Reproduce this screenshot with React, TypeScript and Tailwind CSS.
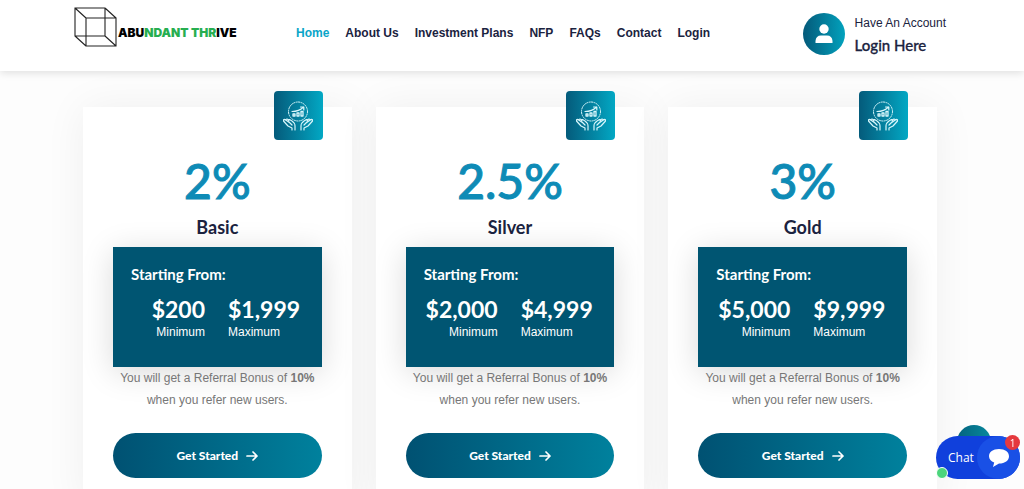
const navLinks = ['Home', 'About Us', 'Investment Plans', 'NFP', 'FAQs', 'Contact', 'Login']

const plans = [
	{ name: 'Basic', rate: '2%', min: '$200', max: '$1,999' },
	{ name: 'Silver', rate: '2.5%', min: '$2,000', max: '$4,999' },
	{ name: 'Gold', rate: '3%', min: '$5,000', max: '$9,999' },
]

type Plan = (typeof plans)[number]

function Logo()
{
	return (
		<a href="#home" className="flex items-center shrink-0" aria-label="Abundant Thrive">
			<svg className="w-[43px] h-10" viewBox="0 0 43 40" fill="none" stroke="#222" strokeWidth="1.1">
				<path d="M1 1H31V29H1ZM12 11H42V39H12ZM1 1L12 11M31 1L42 11M31 29L42 39M1 29L12 39" />
			</svg>
			<span className="mt-3 ml-px font-[Inter,sans-serif] font-black text-[12px] leading-4 whitespace-nowrap text-black">
				ABU<span className="text-[#27ae50]">NDANT THR</span>IVE
			</span>
		</a>
	)
}

function Header()
{
	return (
		<header className="relative z-10 flex h-[71px] items-start bg-white pt-[7px] pl-[74px] pr-[78px] shadow-[0_2px_8px_rgba(0,0,0,0.12)]">
			<div className="w-[222px] shrink-0">
				<Logo />
			</div>
			<nav className="mt-4 flex gap-4 text-xs leading-5 font-bold whitespace-nowrap text-[#1b2340]">
				{navLinks.map((link) => (
					<a key={link} href="#" className={link === 'Home' ? 'text-[#0aa5c8]' : ''}>{link}</a>
				))}
			</nav>
			<a href="#login" className="ml-auto mt-[5px] flex items-center gap-[10px] whitespace-nowrap text-[#1b2340]">
				<span className="flex size-[42px] items-center justify-center rounded-full bg-linear-to-r from-[#045a7a] to-[#02a2bd]">
					<svg className="w-[18px] h-5" viewBox="0 0 18 20" fill="white">
						<circle cx="9" cy="5" r="4.7" />
						<path d="M0.5 19V17Q1 11.5 6 11.5H12Q17 11.5 17.5 17V19Z" />
					</svg>
				</span>
				<span className="flex flex-col">
					<span className="text-xs leading-[22px]">Have An Account</span>
					<span className="font-[Lato,sans-serif] text-[15px] leading-[22px] font-medium [-webkit-text-stroke:0.3px]">Login Here</span>
				</span>
			</a>
		</header>
	)
}

function GrowthIcon()
{
	return (
		<svg className="size-[30px]" viewBox="0 0 30 30" fill="none" stroke="#d8f6fb" strokeWidth="1" strokeLinecap="round" strokeLinejoin="round">
			<circle cx="15" cy="10.5" r="9.5" strokeDasharray="1.2 1.3" />
			<path d="M9 10.5Q16 10.5 20.5 6M17.5 6H20.8V9" strokeWidth="1.2" />
			<path d="M10 15V13H12V15ZM14 15V12H16V15ZM18 15V10.5H20V15Z" strokeWidth="1.3" />
			<path d="M12 29V25Q12 22 9 20L6.5 18.5L5 20L9 24M7 22L2 18.5Q0 18 .5 20L5 25L9 27V29M2 19L4 18L6 19" strokeWidth="1.2" />
			<path d="M18 29V25Q18 22 21 20L23.5 18.5L25 20L21 24M23 22L28 18.5Q30 18 29.5 20L25 25L21 27V29M28 19L26 18L24 19" strokeWidth="1.2" />
		</svg>
	)
}

function PlanCard({ plan }: { plan: Plan })
{
	return (
		<article className="relative flex flex-col items-center bg-white px-[30px] pt-12 pb-[30px] text-center shadow-[0_0_40px_rgba(0,0,0,0.06)]">
			<div className="absolute -top-4 right-[29px] flex size-[49px] items-center justify-center rounded bg-linear-to-r from-[#045b7b] to-[#02a8c4]">
				<GrowthIcon />
			</div>
			<p className="font-[Lato,sans-serif] text-[48px] leading-[52px] font-medium text-[#0e8bb6] [-webkit-text-stroke:1px]">{plan.rate}</p>
			<h3 className="mt-2 font-[Lato,sans-serif] text-lg leading-6 font-bold text-[#1b2340]">{plan.name}</h3>
			<div className="mt-2 h-[120px] w-full bg-[#005572] pt-4 text-white shadow-[0_5px_30px_rgba(0,0,0,0.15)]">
				<h4 className="pl-[18px] text-left font-[Lato,sans-serif] text-[15px] leading-[22px] font-bold">Starting From:</h4>
				<dl className="mt-[10px] grid grid-cols-[92px_1fr] gap-x-[23px]">
					<div className="flex flex-col-reverse text-right">
						<dt className="text-xs leading-[18px]">Minimum</dt>
						<dd className="font-[Lato,sans-serif] text-[23px] leading-7 font-bold">{plan.min}</dd>
					</div>
					<div className="flex flex-col-reverse text-left">
						<dt className="text-xs leading-[18px]">Maximum</dt>
						<dd className="font-[Lato,sans-serif] text-[23px] leading-7 font-bold">{plan.max}</dd>
					</div>
				</dl>
			</div>
			<p className="text-xs leading-[22px] text-[#777]">
				You will get a Referral Bonus of <strong>10%</strong><br />when you refer new users.
			</p>
			<button type="button" className="mt-[22px] flex h-[45px] w-full items-center justify-center gap-2 rounded-full bg-linear-to-r from-[#005172] to-[#00819d] font-[Lato,sans-serif] text-xs font-black text-white">
				Get Started
				<svg className="w-3 h-3" viewBox="0 0 12 12" fill="none" stroke="currentColor" strokeWidth="1.7" strokeLinecap="round" strokeLinejoin="round">
					<path d="M1 6H11M7 2L11 6L7 10" />
				</svg>
			</button>
		</article>
	)
}

function ChatWidget()
{
	return (
		<div className="fixed right-1 bottom-[10px]">
			<span className="absolute -top-[11px] left-[21px] size-[34px] rounded-full bg-linear-to-r from-[#04647f] to-[#08899d]" />
			<button type="button" className="relative flex h-[43px] w-[84px] items-center rounded-full bg-[#1040dc] pl-3 font-['Open_Sans',sans-serif] text-xs text-white">
				Chat
				<span className="absolute top-0 right-0 flex size-[43px] items-center justify-center rounded-full bg-[#1950e6]">
					<svg className="w-5 h-[18px]" viewBox="0 0 20 18" fill="white">
						<path d="M10 0C16 0 20 3 20 7.2S16 14.5 10 14.5L4 18L5.2 13.5C2 12.3 0 10 0 7.2C0 3 4 0 10 0Z" />
					</svg>
				</span>
			</button>
			<span className="absolute -top-px right-0 flex size-[15px] items-center justify-center rounded-full bg-[#e5393e] font-['Open_Sans',sans-serif] text-[10px] leading-none text-white">1</span>
			<span className="absolute bottom-0 left-0 size-3 rounded-full border border-white bg-[#4bd57c]" />
		</div>
	)
}

export default function App()
{
	return (
		<div className="bg-white font-['Liberation_Sans',Arial,sans-serif]">
			<Header />
			<main className="grid grid-cols-3 gap-6 overflow-hidden bg-[#fdfdfd] pt-9 pb-10 pl-[83px] pr-[87px]">
				{plans.map((plan) => (
					<PlanCard key={plan.name} plan={plan} />
				))}
			</main>
			<ChatWidget />
		</div>
	)
}
